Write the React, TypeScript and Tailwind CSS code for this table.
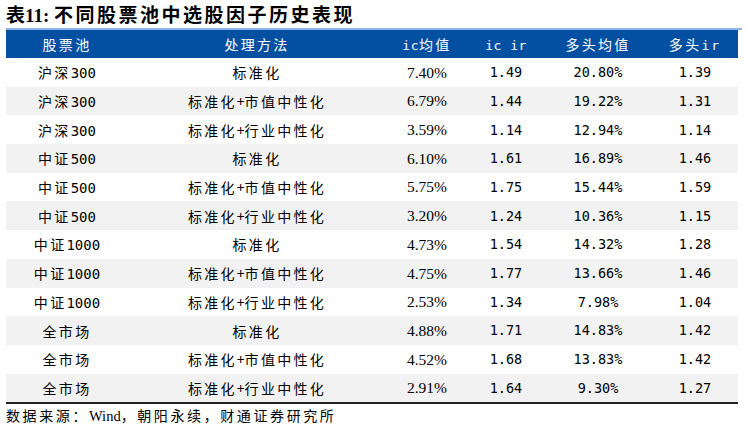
import React from "react";

const CJK = "font-['Noto_Sans_CJK_SC',sans-serif]";
const MONO = "font-['DejaVu_Sans_Mono','Noto_Sans_CJK_SC',monospace]";
const SERIF = "font-['Liberation_Serif','Noto_Sans_CJK_SC',serif]";

type Row = [string, string, string, string, string, string];

const rows: Row[] = [
  ["沪深|300", "标准化", "7.40%", "1.49", "20.80%", "1.39"],
  ["沪深|300", "标准化+市值中性化", "6.79%", "1.44", "19.22%", "1.31"],
  ["沪深|300", "标准化+行业中性化", "3.59%", "1.14", "12.94%", "1.14"],
  ["中证|500", "标准化", "6.10%", "1.61", "16.89%", "1.46"],
  ["中证|500", "标准化+市值中性化", "5.75%", "1.75", "15.44%", "1.59"],
  ["中证|500", "标准化+行业中性化", "3.20%", "1.24", "10.36%", "1.15"],
  ["中证|1000", "标准化", "4.73%", "1.54", "14.32%", "1.28"],
  ["中证|1000", "标准化+市值中性化", "4.75%", "1.77", "13.66%", "1.46"],
  ["中证|1000", "标准化+行业中性化", "2.53%", "1.34", "7.98%", "1.04"],
  ["全市场|", "标准化", "4.88%", "1.71", "14.83%", "1.42"],
  ["全市场|", "标准化+市值中性化", "4.52%", "1.68", "13.83%", "1.42"],
  ["全市场|", "标准化+行业中性化", "2.91%", "1.64", "9.30%", "1.27"],
];

const cols = "grid grid-cols-[122px_258px_82px_76px_108px_86px]";

function Pool({ v }: { v: string }) {
  const [cn, num] = v.split("|");
  return (
    <span className="whitespace-nowrap">
      <span className={`text-[14px] tracking-[2.3px] ${CJK}`}>{cn}</span>
      {num && <span className={`text-[14px] ${MONO}`}>{num}</span>}
    </span>
  );
}

function Method({ v }: { v: string }) {
  const parts = v.split("+");
  return (
    <span className={`whitespace-nowrap text-[14px] tracking-[2.3px] ${CJK}`}>
      {parts[0]}
      {parts[1] && (
        <>
          <span className="tracking-[0px]">+</span>
          {parts[1]}
        </>
      )}
    </span>
  );
}

function H({ a, cn, b }: { a?: string; cn?: string; b?: string }) {
  return (
    <span className="whitespace-nowrap text-white">
      {a && <span className={`text-[13px] tracking-[0.5px] ${MONO}`}>{a}</span>}
      {cn && <span className={`text-[14px] tracking-[2.3px] ${CJK}`}>{cn}</span>}
      {b && <span className={`text-[13px] tracking-[2px] ${MONO}`}>{b}</span>}
    </span>
  );
}

export default function App() {
  return (
    <div className="w-[748px] h-[428px] bg-white overflow-hidden">
      <div className={`pl-[6px] pt-[2px] h-[28px] leading-[24px] font-bold text-[19px] text-black whitespace-nowrap ${SERIF}`}>
        <span className={CJK}>表</span>
        <span>11: </span>
        <span className={`tracking-[2.5px] ${CJK}`}>不同股票池中选股因子历史表现</span>
      </div>
      <div className="ml-[6px] w-[736px] h-[1.5px] bg-[#8db3e2]" />
      <div className="ml-[6px] w-[732px]">
        <div className={`${cols} h-[28.5px] bg-[#0350a3] items-center text-center`}>
          <div><H cn="股票池" /></div>
          <div><H cn="处理方法" /></div>
          <div><H a="ic" cn="均值" /></div>
          <div><H a="ic ir" /></div>
          <div><H cn="多头均值" /></div>
          <div><H cn="多头" b="ir" /></div>
        </div>
        {rows.map((r, i) => (
          <div key={i} className={`${cols} h-[28.7px] items-center text-center text-black ${i % 2 === 1 ? "bg-[#f2f2f2]" : "bg-white"}`}>
            <div><Pool v={r[0]} /></div>
            <div><Method v={r[1]} /></div>
            <div className={`text-[15.5px] ${SERIF}`}>{r[2]}</div>
            <div className={`text-[13.5px] ${MONO}`}>{r[3]}</div>
            <div className={`text-[13.5px] ${MONO}`}>{r[4]}</div>
            <div className={`text-[13.5px] ${MONO}`}>{r[5]}</div>
          </div>
        ))}
        <div className="h-[1.5px] bg-[#222]" />
      </div>
      <div className="pl-[6px] pt-[2px] text-[14px] leading-[18px] text-black whitespace-nowrap">
        <span className={`tracking-[2.6px] ${CJK}`}>数据来源：</span>
        <span className={`text-[14.5px] ${SERIF}`}>Wind</span>
        <span className={`tracking-[2.6px] ${CJK}`}>，朝阳永续，财通证券研究所</span>
      </div>
    </div>
  );
}
